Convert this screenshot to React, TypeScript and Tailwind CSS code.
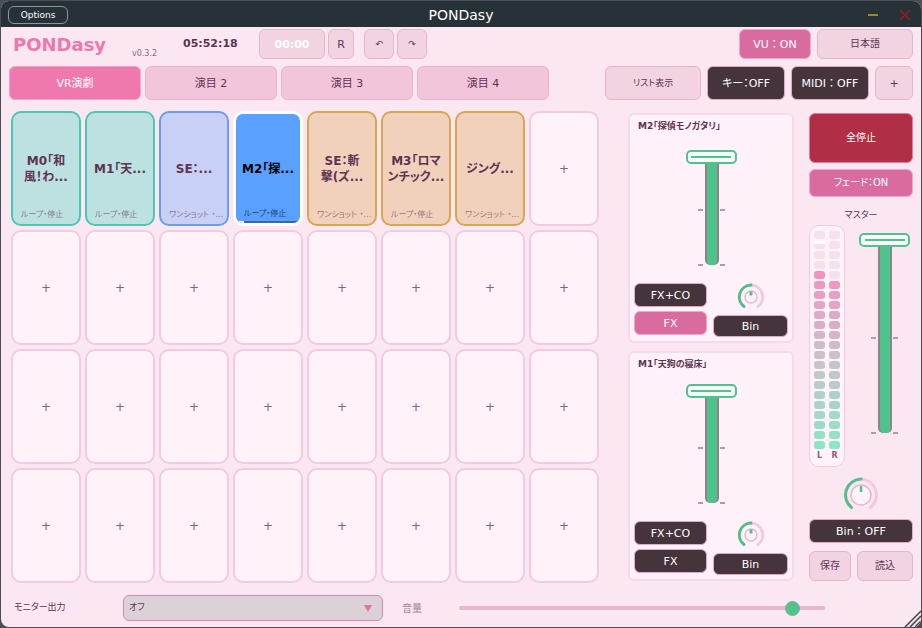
import { useState } from "react";
import clsx from "clsx";

interface Pad {
  title: string[];
  mode: string;
  color: "teal" | "blue" | "orange" | "active";
}

const pads: Pad[] = [
  { title: ["M0「和", "風！わ..."], mode: "ループ・停止", color: "teal" },
  { title: ["M1「天..."], mode: "ループ・停止", color: "teal" },
  { title: ["SE：..."], mode: "ワンショット ・...", color: "blue" },
  { title: ["M2「探..."], mode: "ループ・停止", color: "active" },
  { title: ["SE：斬", "撃(ズ..."], mode: "ワンショット ・...", color: "orange" },
  { title: ["M3「ロマ", "ンチック..."], mode: "ループ・停止", color: "orange" },
  { title: ["ジング..."], mode: "ワンショット ・...", color: "orange" },
];

const padColors = {
  teal: "bg-[#bde1e1] border-2 border-[#4bc8b3] text-[#5d3452]",
  blue: "bg-[#c9d0f5] border-2 border-[#689eea] text-[#5d3452]",
  orange: "bg-[#f2d1bc] border-2 border-[#dba44e] text-[#5d3452]",
  active: "bg-[#59a0ff] border-3 border-white text-black",
};

const light = "rounded-md border border-[#e6b5cd] bg-[#f1d3e2] text-[#5d3452]";
const dark = "rounded-md border border-[#e2a9c5] bg-[#45343c] text-white";
const pink = "rounded-md border border-[#eda9c9] bg-[#d96b9f] text-white";
// keeps the colon at its full width
const wide = "whitespace-nowrap [font-feature-settings:normal]";

const SEGMENTS = 22;

// pink at the top, grey in the middle, mint at the bottom
function segmentColor(i: number) {
  const stops = [[243, 146, 192], [200, 196, 203], [142, 228, 198]];
  const t = Math.max(0, (i - 4) / (SEGMENTS - 5)) * 2;
  const a = t < 1 ? stops[0] : stops[1];
  const b = t < 1 ? stops[1] : stops[2];
  const f = t < 1 ? t : t - 1;
  return `rgb(${a.map((v, k) => Math.round(v + (b[k] - v) * f)).join(",")})`;
}

function PadButton({ pad }: { pad?: Pad }) {
  if (!pad) {
    return (
      <button className="min-w-0 rounded-[10px] border-2 border-[#f1cbdf] bg-[#fff2f9] text-[12px] text-[#8a5f7b]">+</button>
    );
  }
  return (
    <button className={clsx("relative min-w-0 overflow-hidden rounded-[10px]", padColors[pad.color])}>
      <span className="block text-[12px] leading-4 font-bold whitespace-nowrap">
        {pad.title.map((line) => (
          <span key={line} className="block">{line}</span>
        ))}
      </span>
      <span className="absolute inset-x-0 bottom-[3px] pl-2 text-left text-[8px] leading-3 whitespace-nowrap opacity-60">{pad.mode}</span>
      {pad.color === "active" && (
        <span className="absolute inset-x-0 bottom-0 flex h-0.5 bg-[#3568ad]">
          <span className="w-2 bg-white" />
        </span>
      )}
    </button>
  );
}

function Fader({ label, initial }: { label: string; initial: number }) {
  const [value, setValue] = useState(initial);
  const tick = "absolute h-0.5 w-[5px] bg-[#b598ab]";
  return (
    <div className="relative mx-auto w-[51px] shrink-0">
      <div
        className="absolute bottom-0 left-[19px] w-[14px] rounded-b-[5px] border-x-2 border-[#93808e] bg-[#4ec38b]"
        style={{ top: `calc((100% - 14px) * ${(100 - value) / 100} + 7px)` }}
      />
      <div className="absolute inset-x-0 top-[7px] bottom-0">
        <span className={clsx(tick, "top-1/2 left-3")} />
        <span className={clsx(tick, "top-1/2 right-3")} />
        <span className={clsx(tick, "-bottom-px left-3")} />
        <span className={clsx(tick, "right-3 -bottom-px")} />
      </div>
      <input
        type="range"
        aria-label={label}
        value={value}
        onChange={(e) => setValue(Number(e.target.value))}
        className="absolute inset-0 h-full w-full appearance-none bg-transparent [direction:rtl] [writing-mode:vertical-lr] [&::-webkit-slider-thumb]:h-[14px] [&::-webkit-slider-thumb]:w-[51px] [&::-webkit-slider-thumb]:appearance-none [&::-webkit-slider-thumb]:rounded-[5px] [&::-webkit-slider-thumb]:border-2 [&::-webkit-slider-thumb]:border-[#55c08f] [&::-webkit-slider-thumb]:bg-[#f6fdf9] [&::-webkit-slider-thumb]:bg-[linear-gradient(#55c08f,#55c08f)] [&::-webkit-slider-thumb]:bg-[length:40px_2px] [&::-webkit-slider-thumb]:bg-center [&::-webkit-slider-thumb]:bg-no-repeat"
      />
    </div>
  );
}

function Knob({ large }: { large?: boolean }) {
  if (large) {
    return (
      <svg width="36" height="36" viewBox="0 0 36 36" fill="none" strokeLinecap="round" className="mx-auto block">
        <path d="M18 2a16 16 0 0 1 9.5 28.5" stroke="#f0cadd" strokeWidth="3" />
        <path d="M18 2a16 16 0 0 0-9.5 28.5" stroke="#54bd8c" strokeWidth="3" />
        <circle cx="18" cy="18" r="10" fill="#fff2f9" stroke="#e9b6cf" strokeWidth="1.5" />
        <path d="M18 9v6" stroke="#4ec38b" strokeWidth="2.5" strokeLinecap="butt" />
      </svg>
    );
  }
  return (
    <svg width="28" height="28" viewBox="0 0 28 28" fill="none" strokeLinecap="round" className="mx-auto block">
      <path d="M14 2a12 12 0 0 1 7 21.5" stroke="#f0cadd" strokeWidth="3" />
      <path d="M14 2a12 12 0 0 0-7 21.5" stroke="#54bd8c" strokeWidth="3" />
      <circle cx="14" cy="14" r="6" stroke="#e9b6cf" strokeWidth="1.5" />
      <path d="M14 8.500v4" stroke="#4ec38b" strokeWidth="3" strokeLinecap="butt" />
    </svg>
  );
}

function Channel({ title, level, fx }: { title: string; level: number; fx?: boolean }) {
  return (
    <section className="flex flex-1 flex-col rounded-md border-2 border-[#f6dae8] bg-[#fff1f9] p-1">
      <h2 className="pl-1 text-[9px] leading-[15px] font-bold whitespace-nowrap text-[#5d3452]">{title}</h2>
      <div className="mt-3 flex flex-1">
        <Fader label={title} initial={level} />
      </div>
      <div className="mt-[18px] flex justify-between text-[11px] leading-none">
        <div className="flex w-[73px] flex-col gap-1">
          <button className={clsx(dark, "h-6")}>FX+CO</button>
          <button className={clsx(fx ? pink : dark, "h-6")}>FX</button>
        </div>
        <div className="flex w-[75px] flex-col gap-1">
          <Knob />
          <button className={clsx(dark, "h-[22px]")}>Bin</button>
        </div>
      </div>
    </section>
  );
}

function Meter({ name, from, peak }: { name: string; from: number; peak?: number }) {
  return (
    <div className="flex w-[11px] flex-col gap-0.5">
      {Array.from({ length: SEGMENTS }, (_, i) => (
        <div
          key={i}
          className={clsx("h-2 rounded-[3px] bg-[#f5e1ec]", i === peak && "border-t-3 border-white")}
          style={i >= from ? { backgroundColor: segmentColor(i) } : undefined}
        />
      ))}
      <span className="text-center text-[8px] leading-[10px] font-bold text-[#8a6079]">{name}</span>
    </div>
  );
}

export default function App() {
  const [tab, setTab] = useState(0);
  const [volume, setVolume] = useState(93);
  const tabs = ["VR演劇", "演目 2", "演目 3", "演目 4"];

  return (
    <div className="h-screen min-h-[600px] bg-[#4b4d55] p-px font-['DejaVu_Sans','Noto_Sans_CJK_JP',sans-serif] [font-feature-settings:'palt']">
      <div className="relative flex h-full flex-col overflow-hidden rounded-lg bg-[#fae7f1]">
        <header className="grid h-[26px] grid-cols-3 items-center bg-[#263238] px-[7px] pt-0.5 text-white">
          <button className="h-[18px] w-[60px] rounded-md border border-[#87979d] text-[9px] leading-none">Options</button>
          <h1 className="text-center text-[14px] leading-none">PONDasy</h1>
          <div className="flex items-center justify-end gap-5 pr-[3px]">
            <button aria-label="Minimize">
              <svg width="12" height="12" viewBox="0 0 12 12" className="block"><path d="M1 6h10" stroke="#9a8a2c" strokeWidth="2" /></svg>
            </button>
            <button aria-label="Close">
              <svg width="12" height="12" viewBox="0 0 12 12" className="block"><path d="M1 1l10 10M11 1L1 11" stroke="#9b1c22" strokeWidth="1.5" /></svg>
            </button>
          </div>
        </header>

        <div className="flex flex-1 flex-col px-2 pb-1.5">
          <div className="flex h-8 pt-0.5 text-[11px] leading-none">
            <div className="w-[119px] pl-1 text-[18px] leading-8 font-bold text-[#ee78ad]">PONDasy</div>
            <div className="w-[55px] pt-[21px] pl-1 text-[8px] text-[#8f6980]">v0.3.2</div>
            <div className="w-[76px] leading-[30px] font-bold text-[#5d3452]">05:52:18</div>
            <button className="mr-[3px] h-[30px] w-[66px] rounded-md border border-[#e6b5cd] bg-[#f1d3e2] font-bold text-white">00:00</button>
            <button className={clsx(light, "mr-2.5 h-[30px] w-[26px]")}>R</button>
            <button className={clsx(light, "mr-[3px] h-[30px] w-[30px] text-[9px]")}>↶</button>
            <button className={clsx(light, "h-[30px] w-[30px] text-[9px]")}>↷</button>
            <button className={clsx(pink, wide, "mr-1.5 ml-auto h-[30px] w-[72px]")}>VU：ON</button>
            <button className={clsx(light, "h-[30px] w-24 text-[10px]")}>日本語</button>
          </div>

          <div className="mt-[7px] flex gap-1 text-[11px] leading-none">
            {tabs.map((name, i) => (
              <button
                key={name}
                onClick={() => setTab(i)}
                className={clsx(
                  "h-[34px] w-[132px] rounded-md border",
                  i === tab ? "border-[#f4a3c6] bg-[#ef78ad] text-white" : "border-[#e9b5ce] bg-[#f3c5da] text-[#5d3452]"
                )}
              >
                {name}
              </button>
            ))}
            <div className="ml-auto flex gap-1.5">
              <button className={clsx(light, "w-24 text-[9px]")}>リスト表示</button>
              <button className={clsx(dark, "w-[78px] whitespace-nowrap")}>キー：OFF</button>
              <button className={clsx(dark, wide, "w-[78px]")}>MIDI：OFF</button>
              <button className={clsx(light, "w-[38px]")}>+</button>
            </div>
          </div>

          <main className="mt-[11px] flex flex-1">
            <div className="ml-0.5 grid flex-1 grid-cols-8 grid-rows-4 gap-1">
              {Array.from({ length: 32 }, (_, i) => (
                <PadButton key={i} pad={pads[i]} />
              ))}
            </div>

            <div className="ml-[29px] flex w-[166px] flex-col gap-2 py-0.5">
              <Channel title="M2「探偵モノガタリ」" level={96} fx />
              <Channel title="M1「天狗の寝床」" level={100} />
            </div>

            <aside className="ml-[15px] flex w-[104px] flex-col py-0.5 text-[11px] leading-none">
              <button className="h-[50px] rounded-md border border-[#dd7fa0] bg-[#b02e46] text-[10px] text-white">全停止</button>
              <button className={clsx(pink, "mt-1.5 h-7 text-[10px]")}>フェード：ON</button>
              <div className="mt-2.5 mb-0.5 text-center text-[9px] leading-4 text-[#5d3452]">マスター</div>
              <div className="flex flex-1">
                <div className="flex w-9 gap-1 rounded-[10px] border border-[#f1cbdf] bg-[#fff2f9] px-1 pt-[5px]">
                  <Meter name="L" from={4} peak={1} />
                  <Meter name="R" from={5} />
                </div>
                <div className="flex flex-1 pt-2 pb-[34px] pl-[11px]">
                  <Fader label="マスター" initial={100} />
                </div>
              </div>
              <div className="mt-2.5 mb-1.5">
                <Knob large />
              </div>
              <button className={clsx(dark, wide, "h-6")}>Bin：OFF</button>
              <div className="mt-2 flex gap-1.5 text-[10px]">
                <button className={clsx(light, "h-[30px] w-[42px]")}>保存</button>
                <button className={clsx(light, "h-[30px] flex-1")}>読込</button>
              </div>
            </aside>
          </main>

          <footer className="mt-3 flex items-center text-[9px] text-[#5d3452]">
            <label htmlFor="monitor" className="w-[114px] pl-[5px]">モニター出力</label>
            <div className="relative w-[260px]">
              <select id="monitor" className="block h-[26px] w-full appearance-none rounded-md border border-[#de86b1] bg-[#ddd1d8] px-[5px]">
                <option>オフ</option>
              </select>
              <svg width="8" height="7" viewBox="0 0 8 7" className="pointer-events-none absolute top-[10px] right-[11px]">
                <path d="M0 0h8L4 7z" fill="#e76fa6" />
              </svg>
            </div>
            <label htmlFor="volume" className="w-[76px] pl-[19px] text-[10px] text-[#a47f97]">音量</label>
            <input
              id="volume"
              type="range"
              value={volume}
              onChange={(e) => setVolume(Number(e.target.value))}
              className="mr-[88px] h-1 flex-1 appearance-none rounded-full bg-[#ebb5cf] [&::-webkit-slider-thumb]:size-[15px] [&::-webkit-slider-thumb]:appearance-none [&::-webkit-slider-thumb]:rounded-full [&::-webkit-slider-thumb]:border [&::-webkit-slider-thumb]:border-[#8fa596] [&::-webkit-slider-thumb]:bg-[#4ec38b]"
            />
          </footer>
        </div>

        <svg width="17" height="17" viewBox="0 0 17 17" className="absolute right-0 bottom-0">
          <path d="M1 17L17 1v16z" fill="#e9e6e8" />
          <path d="M1 17L17 1M6 17L17 6M11 17l6-6" stroke="#4a4048" strokeWidth="1.500" />
        </svg>
      </div>
    </div>
  );
}
